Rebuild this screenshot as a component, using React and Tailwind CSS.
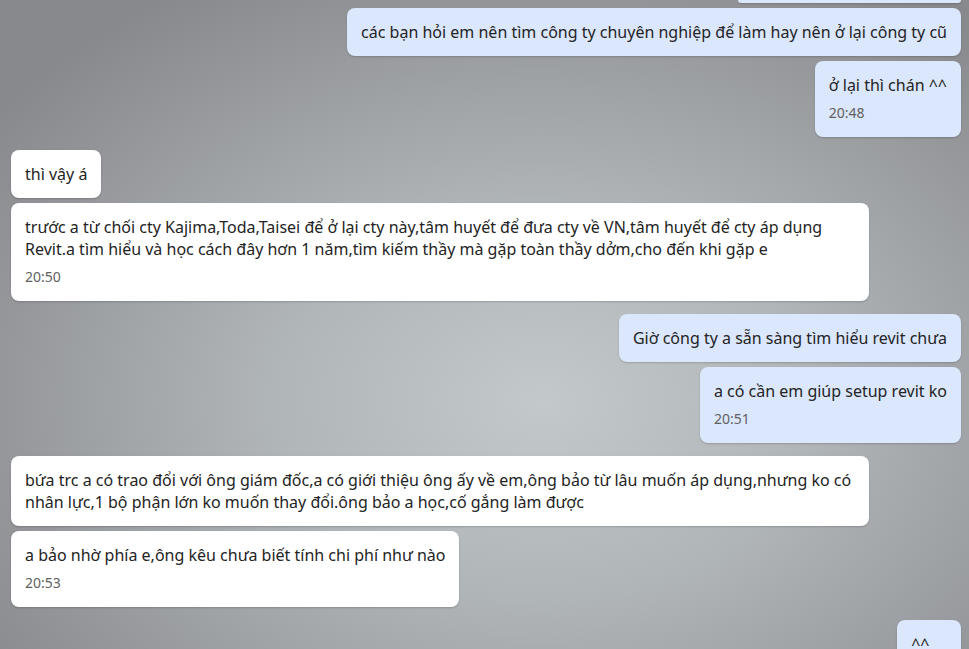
import React from "react";

function Bubble({ side, children, time, className = "" }) {
  const base =
    side === "right"
      ? "self-end bg-[#dbe7fd]"
      : "self-start bg-white";
  return (
    <div
      className={`${base} rounded-lg px-[14px] py-[13px] shadow-[0_1px_2px_rgba(0,0,0,0.18)] max-w-[858px] ${className}`}
    >
      <div className="text-[16px] leading-[22px] text-[#242424]">{children}</div>
      {time && (
        <div className="mt-[6px] text-[14px] leading-[22px] text-[#616161]">{time}</div>
      )}
    </div>
  );
}

function Group({ children }) {
  return <div className="flex flex-col gap-[5px]">{children}</div>;
}

export default function App() {
  return (
    <div
      className="relative h-[649px] w-[969px] overflow-hidden bg-[radial-gradient(ellipse_70%_75%_at_56%_62%,#c3c9cb_0%,#b0b5b8_40%,#95979b_80%,#88898d_100%)]"
      style={{ fontFamily: '"Segoe UI", "Noto Sans", "Open Sans", sans-serif' }}
    >
      <div className="flex flex-col gap-[13px] pl-[11px] pr-[8px]">
        <Group>
          <div className="self-end h-[3px] w-[223px] rounded-b-lg bg-[#dbe7fd] shadow-[0_1px_2px_rgba(0,0,0,0.18)]" />
          <Bubble side="right">
            các bạn hỏi em nên tìm công ty chuyên nghiệp để làm hay nên ở lại công ty cũ
          </Bubble>
          <Bubble side="right" time="20:48">
            ở lại thì chán ^^
          </Bubble>
        </Group>
        <Group>
          <Bubble side="left">thì vậy á</Bubble>
          <Bubble side="left" time="20:50" className="w-[858px]">
            trước a từ chối cty Kajima,Toda,Taisei để ở lại cty này,tâm huyết để đưa cty về VN,tâm huyết để cty áp dụng
            <br />
            Revit.a tìm hiểu và học cách đây hơn 1 năm,tìm kiếm thầy mà gặp toàn thầy dởm,cho đến khi gặp e
          </Bubble>
        </Group>
        <Group>
          <Bubble side="right">Giờ công ty a sẵn sàng tìm hiểu revit chưa</Bubble>
          <Bubble side="right" time="20:51">
            a có cần em giúp setup revit ko
          </Bubble>
        </Group>
        <Group>
          <Bubble side="left" className="w-[858px]">
            bứa trc a có trao đổi với ông giám đốc,a có giới thiệu ông ấy về em,ông bảo từ lâu muốn áp dụng,nhưng ko có
            <br />
            nhân lực,1 bộ phận lớn ko muốn thay đổi.ông bảo a học,cố gắng làm được
          </Bubble>
          <Bubble side="left" time="20:53">
            a bảo nhờ phía e,ông kêu chưa biết tính chi phí như nào
          </Bubble>
        </Group>
        <Group>
          <Bubble side="right" time="20:54">
            ^^
          </Bubble>
        </Group>
      </div>
    </div>
  );
}
